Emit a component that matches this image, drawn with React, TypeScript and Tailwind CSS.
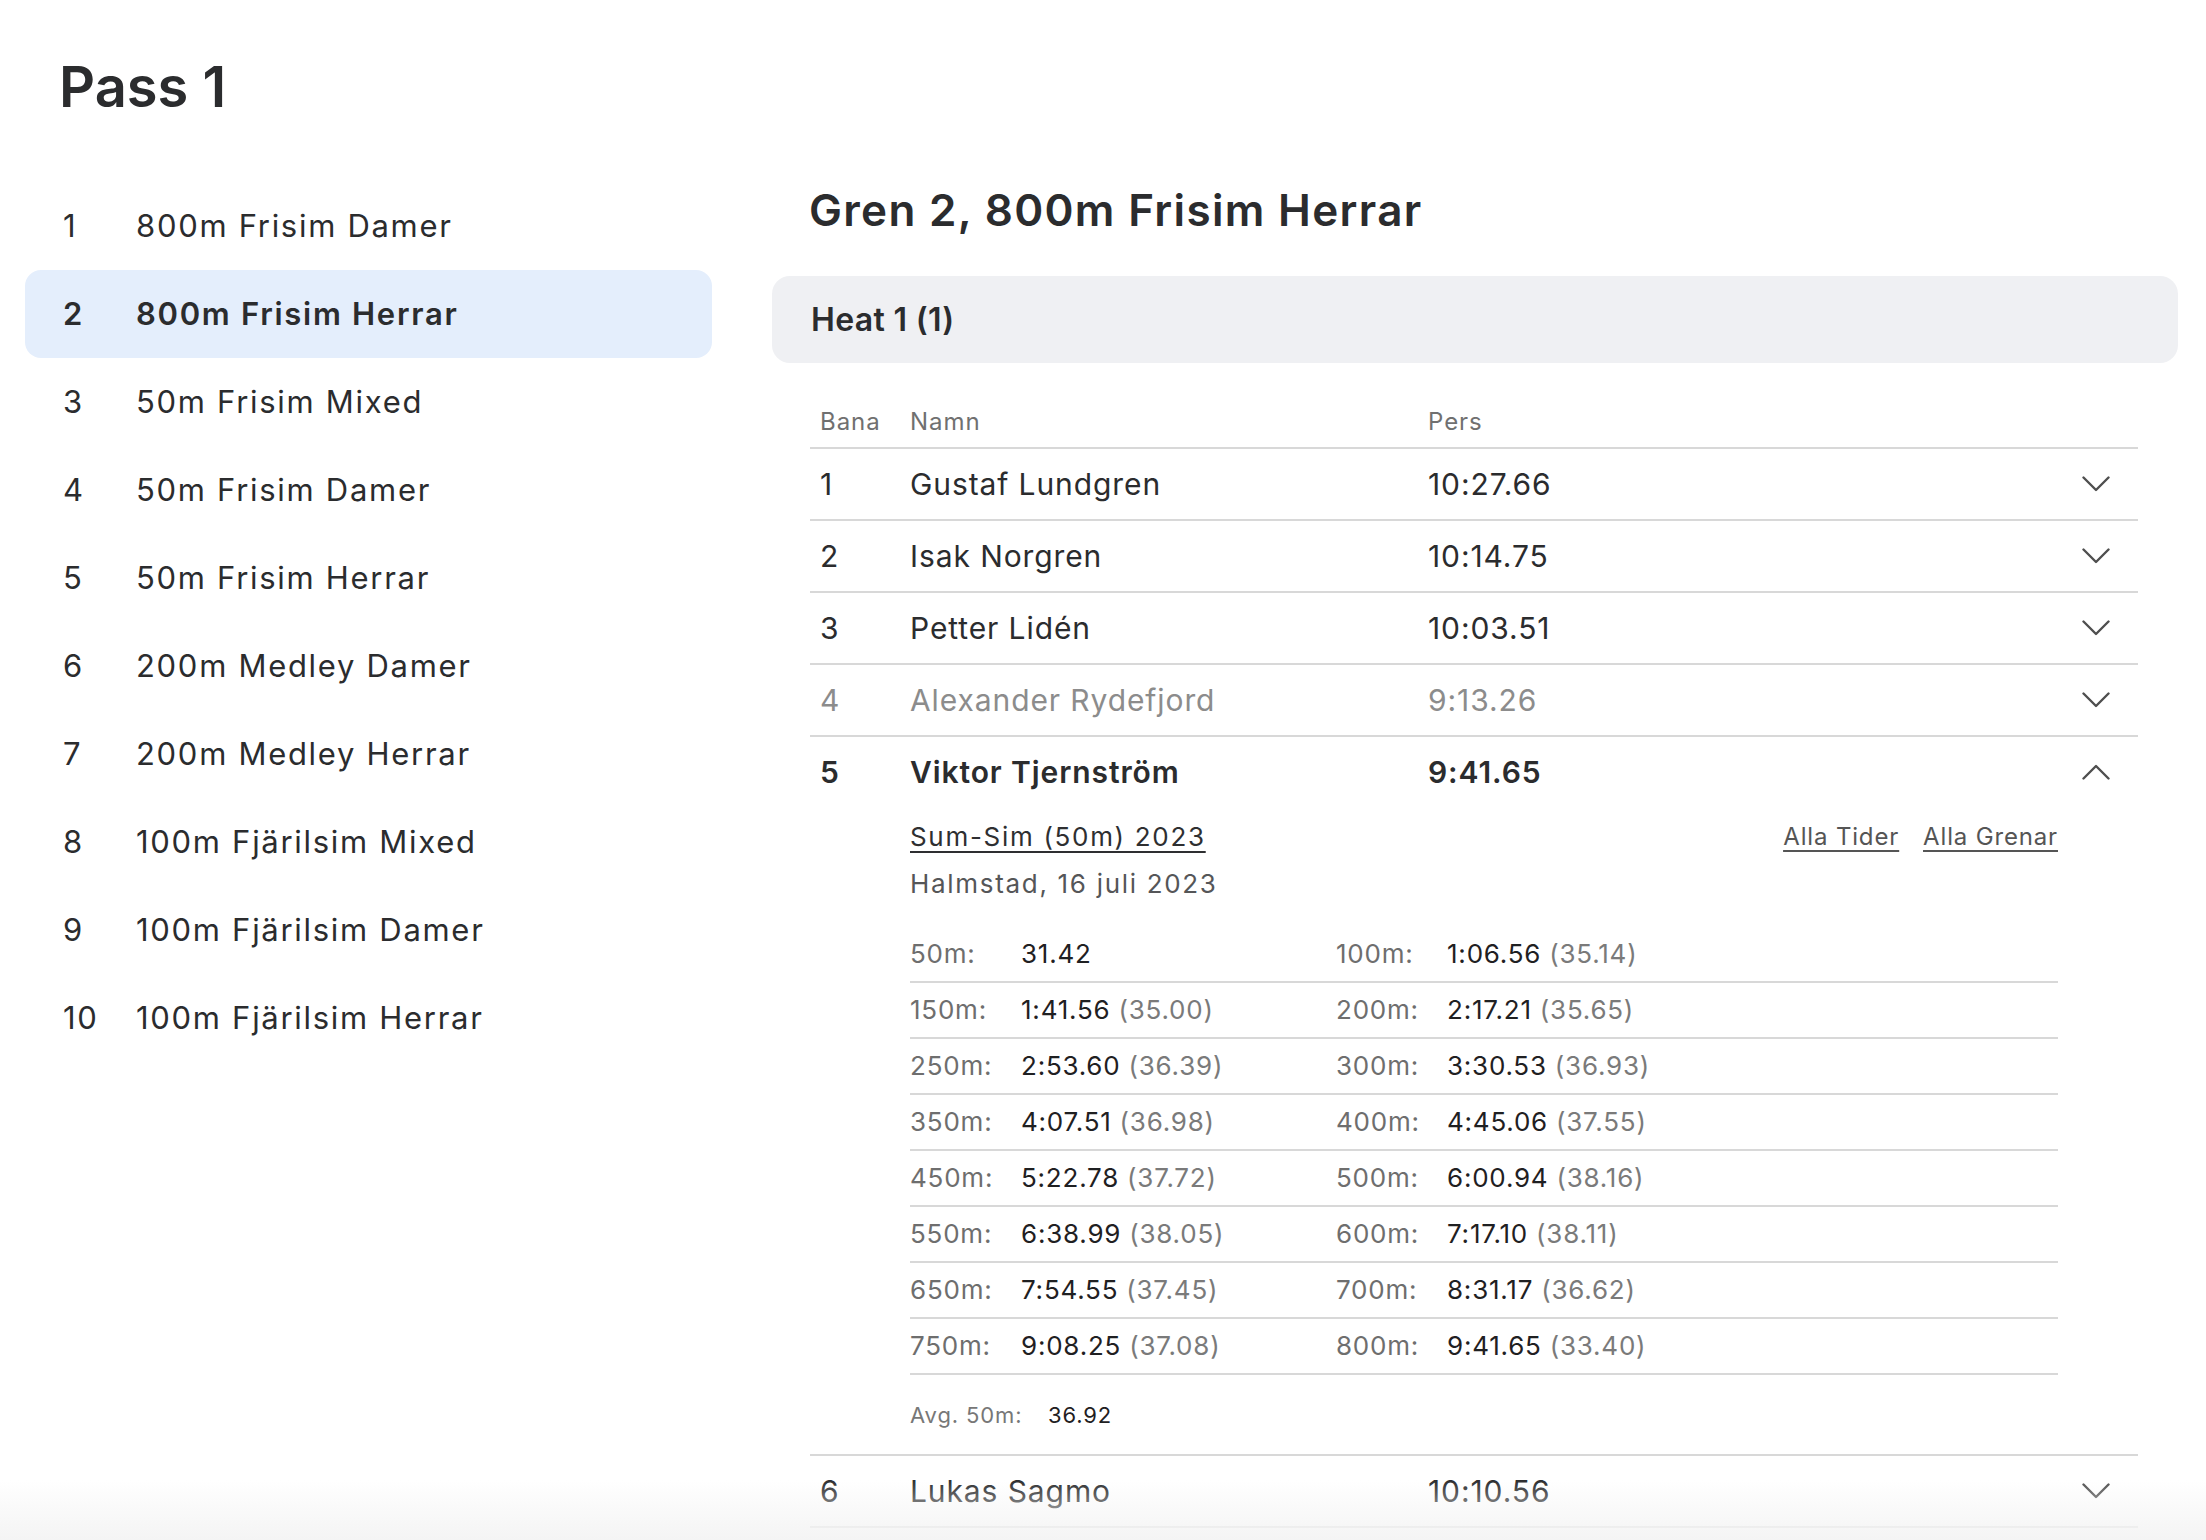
const events = [
  { nr: 1, name: "800m Frisim Damer" },
  { nr: 2, name: "800m Frisim Herrar" },
  { nr: 3, name: "50m Frisim Mixed" },
  { nr: 4, name: "50m Frisim Damer" },
  { nr: 5, name: "50m Frisim Herrar" },
  { nr: 6, name: "200m Medley Damer" },
  { nr: 7, name: "200m Medley Herrar" },
  { nr: 8, name: "100m Fjärilsim Mixed" },
  { nr: 9, name: "100m Fjärilsim Damer" },
  { nr: 10, name: "100m Fjärilsim Herrar" },
];

const swimmers = [
  { lane: 1, name: "Gustaf Lundgren", time: "10:27.66" },
  { lane: 2, name: "Isak Norgren", time: "10:14.75" },
  { lane: 3, name: "Petter Lidén", time: "10:03.51" },
  { lane: 4, name: "Alexander Rydefjord", time: "9:13.26", muted: true },
  { lane: 5, name: "Viktor Tjernström", time: "9:41.65", open: true },
  { lane: 6, name: "Lukas Sagmo", time: "10:10.56" },
];

const splits = [
  ["50m:", "31.42", ""],
  ["100m:", "1:06.56", "(35.14)"],
  ["150m:", "1:41.56", "(35.00)"],
  ["200m:", "2:17.21", "(35.65)"],
  ["250m:", "2:53.60", "(36.39)"],
  ["300m:", "3:30.53", "(36.93)"],
  ["350m:", "4:07.51", "(36.98)"],
  ["400m:", "4:45.06", "(37.55)"],
  ["450m:", "5:22.78", "(37.72)"],
  ["500m:", "6:00.94", "(38.16)"],
  ["550m:", "6:38.99", "(38.05)"],
  ["600m:", "7:17.10", "(38.11)"],
  ["650m:", "7:54.55", "(37.45)"],
  ["700m:", "8:31.17", "(36.62)"],
  ["750m:", "9:08.25", "(37.08)"],
  ["800m:", "9:41.65", "(33.40)"],
];

function Chevron({ up }: { up?: boolean }) {
  return (
    <svg width="28" height="16" viewBox="0 0 28 16" fill="none" className={up ? "rotate-180" : ""}>
      <polyline points="1.5,1.5 14,14 26.5,1.5" stroke="#4f4f4f" strokeWidth="2.4" strokeLinecap="round" strokeLinejoin="round" />
    </svg>
  );
}

function SplitCell({ s }: { s: string[] }) {
  return (
    <div className="flex w-[426px]">
      <span className="w-[111px] text-[#6e6e6e]">{s[0]}</span>
      <span className="text-[#1f2022]">{s[1]}</span>
      {s[2] && <span className="ml-[8px] text-[#7a7a7a]">{s[2]}</span>}
    </div>
  );
}

function Expanded() {
  const rows = [];
  for (let i = 0; i < splits.length; i += 2) rows.push([splits[i], splits[i + 1]]);
  return (
    <div className="pl-[100px] pr-[80px] pb-[24px]">
      <div className="mt-[10px] flex items-center justify-between leading-[40px]">
        <a className="text-[26px] tracking-[0.065em] text-[#2e2f31] underline decoration-[1.5px] underline-offset-[5px]">
          Sum-Sim (50m) 2023
        </a>
        <div className="flex gap-[24px] text-[24px] tracking-[0.035em] text-[#555] underline decoration-[1.5px] underline-offset-[5px]">
          <a>Alla Tider</a>
          <a>Alla Grenar</a>
        </div>
      </div>
      <div className="mt-[7px] text-[26px] tracking-[0.065em] leading-[40px] text-[#555658]">Halmstad, 16 juli 2023</div>
      <div className="mt-[23px] text-[26px] tracking-[0.03em]">
        {rows.map((r, i) => (
          <div key={i} className="flex border-b-2 border-[#d8d8d8] leading-[54px]">
            <SplitCell s={r[0]} />
            <SplitCell s={r[1]} />
          </div>
        ))}
      </div>
      <div className="mt-[25px] flex text-[22px] tracking-[0.04em] leading-[30px]">
        <span className="w-[138px] text-[#777]">Avg. 50m:</span>
        <span className="text-[#1f2022]">36.92</span>
      </div>
    </div>
  );
}

export default function App() {
  return (
    <div className="relative h-[1540px] overflow-hidden bg-white font-['Inter',sans-serif] tracking-[0.02em] text-[#2b2c2e]">
      <div className="flex pl-[25px] pt-[59px]">
        <aside className="w-[687px] shrink-0">
          <h1 className="pl-[34px] text-[56px] font-semibold leading-[56px] tracking-[0]">Pass 1</h1>
          <ul className="mt-[67px]">
            {events.map((e) => (
              <li
                key={e.nr}
                className={
                  "flex h-[88px] items-center rounded-[16px] pl-[38px] text-[31px] tracking-[0.055em] " +
                  (e.nr === 2 ? "bg-[#e4eefc] font-semibold" : "font-normal")
                }
              >
                <span className="w-[73px]">{e.nr}</span>
                <span>{e.name}</span>
              </li>
            ))}
          </ul>
        </aside>

        <main className="ml-[60px] w-[1406px] shrink-0">
          <h2 className="mt-[129px] pl-[37px] text-[44px] font-semibold leading-[44px] tracking-[0.03em]">Gren 2, 800m Frisim Herrar</h2>
          <div className="mt-[44px] flex h-[87px] items-center rounded-[18px] bg-[#eff0f3] pl-[39px] text-[32px] font-semibold">
            Heat 1 (1)
          </div>

          <div className="ml-[38px] mr-[40px] mt-[33px]">
            <div className="flex h-[53px] items-center border-b-2 border-[#d8d8d8] text-[24px] tracking-[0.04em] text-[#707070]">
              <span className="w-[100px] pl-[10px]">Bana</span>
              <span className="w-[518px]">Namn</span>
              <span>Pers</span>
            </div>
            {swimmers.map((s) => (
              <div key={s.lane} className="border-b-2 border-[#d8d8d8]">
                <div
                  className={
                    "flex h-[70px] items-center text-[30px] tracking-[0.03em] " +
                    (s.muted ? "text-[#8c8c8c] " : "") +
                    (s.open ? "font-semibold" : "font-normal")
                  }
                >
                  <span className="w-[100px] pl-[10px]">{s.lane}</span>
                  <span className="w-[518px]">{s.name}</span>
                  <span className="flex-1">{s.time}</span>
                  <span className="pr-[28px]">
                    <Chevron up={s.open} />
                  </span>
                </div>
                {s.open && <Expanded />}
              </div>
            ))}
          </div>
        </main>
      </div>
      <div className="pointer-events-none absolute inset-x-0 bottom-0 h-[60px] bg-gradient-to-b from-white/0 to-[#f4f4f4]" />
    </div>
  );
}
